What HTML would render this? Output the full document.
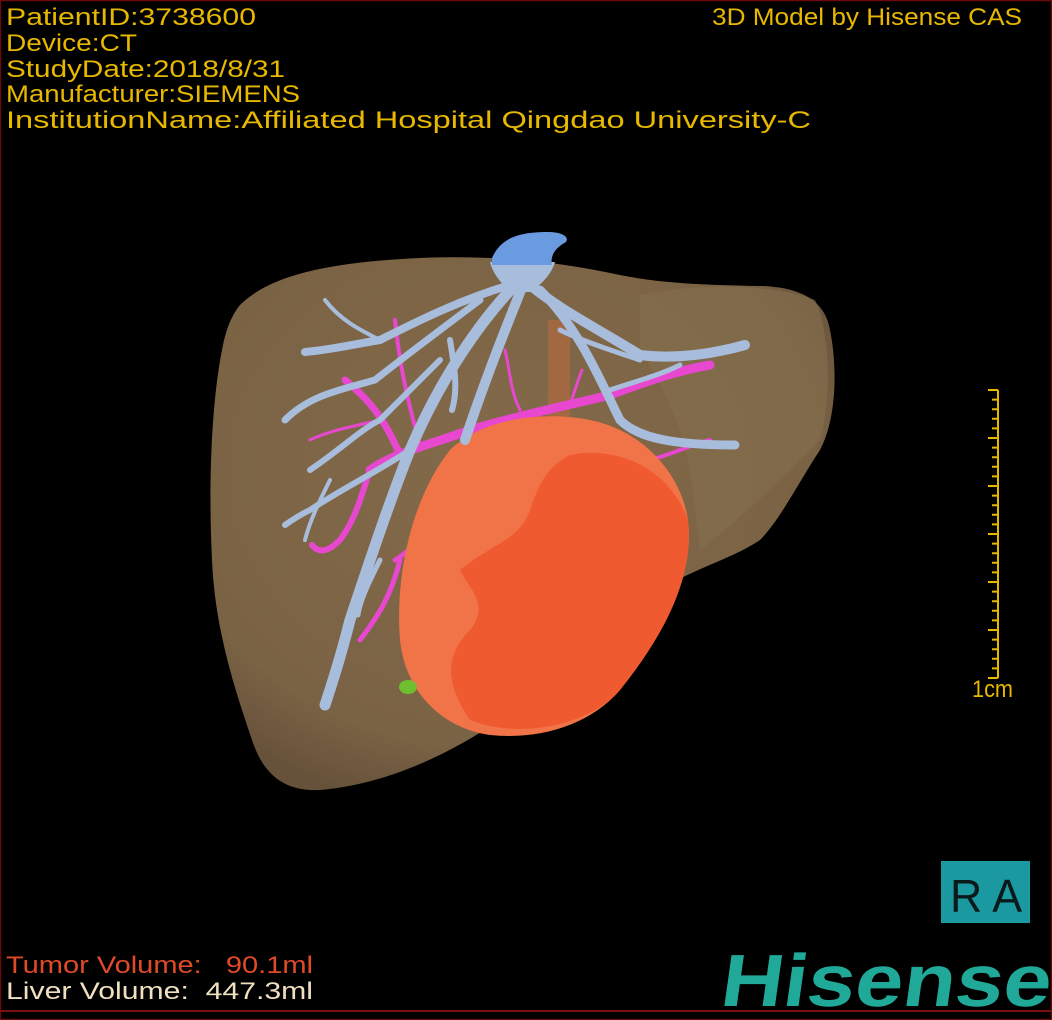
<!DOCTYPE html>
<html><head><meta charset="utf-8"><style>
html,body{margin:0;padding:0;background:#000;}
svg{display:block}
</style></head><body>
<svg width="1052" height="1020" viewBox="0 0 1052 1020" xmlns="http://www.w3.org/2000/svg">
<rect x="0" y="0" width="1052" height="1020" fill="#000"/>
<rect x="0.5" y="0.5" width="1051" height="1019" fill="none" stroke="#6a0a0a" stroke-width="1.5"/>
<line x1="0" y1="1011" x2="1052" y2="1011" stroke="#7a1010" stroke-width="2"/>
<defs>
<radialGradient id="lv" cx="0.45" cy="0.4" r="0.65">
<stop offset="0" stop-color="#836a4a"/><stop offset="0.8" stop-color="#7a6244"/><stop offset="1" stop-color="#66513a"/>
</radialGradient>
</defs>
<path d="M240,305 C270,275 330,262 420,258 C500,255 560,262 620,275 C660,283 700,285 760,286 C800,287 825,300 830,330 C838,370 836,420 820,450 C800,480 780,520 760,540 C730,560 700,565 640,600 C600,630 560,680 500,720 C440,760 380,785 320,790 C280,792 262,770 252,740 C235,690 215,630 212,560 C208,480 212,400 222,350 C226,328 232,315 240,305 Z" fill="url(#lv)"/>
<path d="M640,295 C700,282 780,285 815,300 C830,330 832,400 820,440 C790,470 740,520 700,550 L690,470 C680,420 660,380 640,350 Z" fill="#86704f" opacity="0.6"/>
<rect x="548" y="320" width="22" height="110" fill="#b06a40" opacity="0.7"/>
<g stroke="#e848d0" fill="none" stroke-linecap="round">
<path d="M370,470 C400,450 430,445 470,430 C520,415 570,405 610,395 C650,380 680,370 710,365" stroke-width="9"/>
<path d="M400,455 C385,420 370,400 345,380" stroke-width="7"/>
<path d="M420,445 C410,410 400,370 395,320" stroke-width="4"/>
<path d="M370,470 C360,500 355,520 340,540 C330,550 320,555 312,545" stroke-width="6"/>
<path d="M400,560 C390,600 375,620 360,640" stroke-width="5"/>
<path d="M520,410 C510,390 510,370 505,350" stroke-width="3"/>
<path d="M570,405 C575,390 578,380 582,370" stroke-width="3"/>
<path d="M650,460 C670,455 690,445 710,440" stroke-width="4"/>
<path d="M380,420 C360,425 330,430 310,440" stroke-width="3"/>
<path d="M440,520 C420,540 405,555 395,560" stroke-width="5"/>
</g>
<path d="M450,450 C480,420 540,410 590,420 C640,430 680,470 688,520 C695,580 660,640 620,690 C590,725 540,740 490,735 C440,728 405,690 400,640 C395,580 410,500 450,450 Z" fill="#f07448"/>
<path d="M570,455 C620,445 670,470 688,520 C695,580 660,640 620,690 C590,725 520,740 470,720 C450,690 440,660 470,630 C490,605 470,590 460,570 C490,545 520,540 530,510 C540,480 550,465 570,455 Z" fill="#f05a30"/>
<ellipse cx="408" cy="687" rx="9" ry="7" fill="#6fbf30"/>
<g stroke="#a8bcdc" fill="none" stroke-linecap="round">
<path d="M520,280 C480,320 440,380 410,450 C390,500 370,560 350,620 C340,660 330,690 325,705" stroke-width="11"/>
<path d="M525,280 C505,330 485,380 465,440" stroke-width="10"/>
<path d="M530,285 C560,310 600,330 640,355 C680,360 720,352 745,345" stroke-width="10"/>
<path d="M540,290 C580,330 600,380 620,420 C640,440 680,445 735,445" stroke-width="9"/>
<path d="M510,285 C460,300 420,320 380,340 C350,345 330,350 305,352" stroke-width="8"/>
<path d="M480,300 C440,330 400,360 375,380 C340,390 310,395 285,420" stroke-width="7"/>
<path d="M410,450 C380,470 340,490 310,510 C300,515 292,520 285,525" stroke-width="6"/>
<path d="M440,360 C420,380 400,400 380,420 C360,430 340,450 310,470" stroke-width="6"/>
<path d="M380,340 C360,330 340,320 325,300" stroke-width="4"/>
<path d="M610,390 C640,380 660,375 680,365" stroke-width="5"/>
<path d="M560,330 C580,340 610,350 640,360" stroke-width="5"/>
<path d="M380,560 C370,580 360,600 358,615" stroke-width="5"/>
<path d="M450,340 C455,370 458,390 452,410" stroke-width="6"/>
<path d="M330,480 C320,500 310,520 305,540" stroke-width="4"/>
</g>
<path d="M490,262 L555,262 C552,272 545,282 530,292 L510,292 C500,282 492,272 490,262 Z" fill="#a8bcdc"/>
<path d="M492,258 C500,240 515,232 548,232 C560,232 570,236 566,242 C555,248 550,256 552,265 L492,265 Z" fill="#6a9ae0"/>
<g font-family="Liberation Sans, sans-serif" font-size="24" fill="#e8b800">
<text x="6" y="25" textLength="250" lengthAdjust="spacingAndGlyphs">PatientID:3738600</text>
<text x="6" y="51" textLength="131" lengthAdjust="spacingAndGlyphs">Device:CT</text>
<text x="6" y="77" textLength="279" lengthAdjust="spacingAndGlyphs">StudyDate:2018/8/31</text>
<text x="6" y="102" textLength="294" lengthAdjust="spacingAndGlyphs">Manufacturer:SIEMENS</text>
<text x="6" y="128" textLength="805" lengthAdjust="spacingAndGlyphs">InstitutionName:Affiliated Hospital Qingdao University-C</text>
<text x="712" y="25" textLength="310" lengthAdjust="spacingAndGlyphs">3D Model by Hisense CAS</text>
<text x="972" y="697" textLength="41" lengthAdjust="spacingAndGlyphs">1cm</text>
<text x="6" y="973" fill="#e04a28" textLength="307" lengthAdjust="spacingAndGlyphs" xml:space="preserve">Tumor Volume:   90.1ml</text>
<text x="6" y="999" fill="#f0e0c0" textLength="307" lengthAdjust="spacingAndGlyphs" xml:space="preserve">Liver Volume:  447.3ml</text>
</g>
<g stroke="#e8b800" stroke-width="2">
<line x1="998" y1="390" x2="998" y2="678"/>
<path d="M988,390H998M992,399.6H998M992,409.2H998M992,418.8H998M992,428.4H998M988,438H998M992,447.6H998M992,457.2H998M992,466.8H998M992,476.4H998M988,486H998M992,495.6H998M992,505.2H998M992,514.8H998M992,524.4H998M988,534H998M992,543.6H998M992,553.2H998M992,562.8H998M992,572.4H998M988,582H998M992,591.6H998M992,601.2H998M992,610.8H998M992,620.4H998M988,630H998M992,639.6H998M992,649.2H998M992,658.8H998M992,668.4H998M988,678H998"/>
</g>
<rect x="941" y="861" width="89" height="62" fill="#1a9aa0"/>
<text x="950" y="912" font-family="Liberation Sans, sans-serif" font-size="46" fill="#0a1a1a" textLength="72" lengthAdjust="spacingAndGlyphs">R A</text>
<text x="720" y="1006" font-family="Liberation Sans, sans-serif" font-size="74" font-weight="bold" fill="#20a898" textLength="330" lengthAdjust="spacingAndGlyphs" transform="skewX(-8) translate(140,0)">Hisense</text>
</svg>
</body></html>
